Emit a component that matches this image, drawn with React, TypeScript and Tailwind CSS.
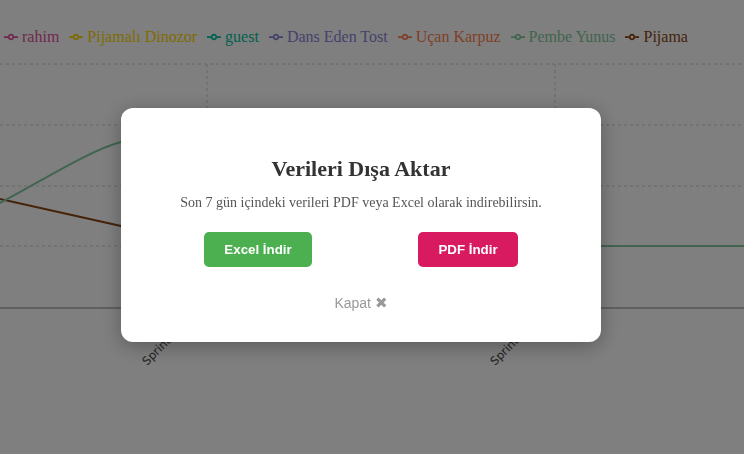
const series = [
  { name: "rahim", color: "#e0529c" },
  { name: "Pijamalı Dinozor", color: "#ffd700" },
  { name: "guest", color: "#00c49f" },
  { name: "Dans Eden Tost", color: "#8884d8" },
  { name: "Uçan Karpuz", color: "#ff7f50" },
  { name: "Pembe Yunus", color: "#82ca9d" },
  { name: "Pijama", color: "#8b4513" },
];

function LegendIcon({ color }: { color: string }) {
  return (
    <svg width="14" height="14" viewBox="0 0 32 32" className="mr-[4px] shrink-0">
      <path
        d="M0,16h10.67A5.33,5.33,0,1,1,21.33,16H32M21.33,16A5.33,5.33,0,1,1,10.67,16"
        fill="none"
        stroke={color}
        strokeWidth="4"
      />
    </svg>
  );
}

function Chart() {
  const grid = [64, 125, 186, 246];
  return (
    <svg width="744" height="408" viewBox="0 46 744 408" className="block">
      {grid.map((y) => (
        <line key={y} x1="0" x2="744" y1={y} y2={y} stroke="#ccc" strokeDasharray="3 3" />
      ))}
      {[207, 555].map((x) => (
        <line key={x} x1={x} x2={x} y1="64" y2="308" stroke="#ccc" strokeDasharray="3 3" />
      ))}
      <line x1="0" x2="744" y1="308" y2="308" stroke="#aaa" strokeWidth="1.5" />
      <path d="M0,199 C50,210 100,221 121,226 C160,236 190,244 207,246 L744,246" fill="none" stroke="#8b4513" strokeWidth="2" />
      <path d="M0,203 C40,182 90,150 121,142 C160,132 190,126 207,125 C300,180 450,246 555,246 L744,246" fill="none" stroke="#82ca9d" strokeWidth="2" />
      {[
        { x: 147, label: "Sprint 1" },
        { x: 495, label: "Sprint 2" },
      ].map((t) => (
        <text
          key={t.x}
          x={t.x}
          y="366"
          transform={`rotate(-45 ${t.x} 366)`}
          fill="#444"
          fontSize="11.5"
          fontFamily="'DejaVu Sans', sans-serif"
        >
          {t.label}
        </text>
      ))}
    </svg>
  );
}

export default function App() {
  return (
    <div className="relative w-[744px] h-[454px] overflow-hidden bg-white">
      <ul className="flex pl-[4px] pt-[28px] font-['Liberation_Serif',serif] text-[16px] leading-[18px]">
        {series.map((s) => (
          <li key={s.name} className="flex items-center mr-[10px] whitespace-nowrap">
            <LegendIcon color={s.color} />
            <span style={{ color: s.color }}>{s.name}</span>
          </li>
        ))}
      </ul>
      <Chart />

      {/* Dışa aktar modalı */}
      <div className="fixed inset-0 bg-black/50 flex items-center justify-center pr-[22px] pb-[4px]">
        <div className="w-[480px] bg-white rounded-xl px-[30px] pt-[30px] pb-[31px] text-center shadow-[0_4px_20px_rgba(0,0,0,0.3)]">
          <h2 className="mt-[17px] text-[22px] leading-[27px] font-bold text-[#333] font-['Liberation_Serif',serif]">
            Verileri Dışa Aktar
          </h2>
          <p className="mt-[13px] text-[14px] leading-[16px] text-[#555] font-['Liberation_Serif',serif]">
            Son 7 gün içindeki verileri PDF veya Excel olarak indirebilirsin.
          </p>
          <div className="mt-[21px] flex justify-around font-['Liberation_Sans',Arial,sans-serif] text-[13.333px] leading-[15px] font-bold text-white">
            <button className="bg-[#4caf50] px-[20px] py-[10px] rounded-[5px]">Excel İndir</button>
            <button className="bg-[#d81b60] px-[20px] py-[10px] rounded-[5px]">PDF İndir</button>
          </div>
          <button className="mt-[28px] flex items-center mx-auto h-[16px] text-[14px] leading-[16px] text-[#999] font-['Liberation_Sans',Arial,sans-serif]">
            Kapat
            <span className="ml-[4px] font-['DejaVu_Sans',sans-serif] text-[15px]">✖</span>
          </button>
        </div>
      </div>
    </div>
  );
}
